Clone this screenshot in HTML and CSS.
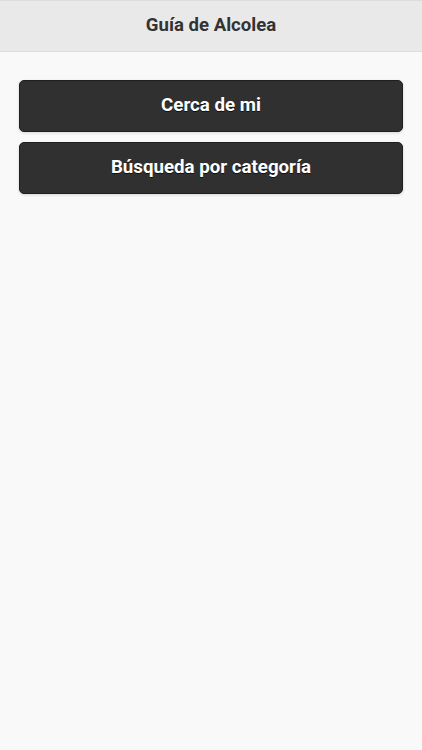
FILE: index.html
```html
<!doctype html>
<html lang="es">
    <head>
        <meta charset="utf-8"/>
        <title>Guía de Alcolea</title>
        <link rel="stylesheet" href="styles.css">
    </head>
    <body>
        <div class="page">
            <header class="bar">
                <h1>Guía de Alcolea</h1>
            </header>
            <main class="content">
                <a class="btn" href="#cerca">Cerca de mi</a>
                <a class="btn" href="#categorias">Búsqueda por categoría</a>
            </main>
        </div>
    </body>
</html>
```

FILE: styles.css
```css
body {
    margin: 0;
    background-color: #f9f9f9;
    font-family: Roboto, "Liberation Sans", sans-serif;
}

.page {
    min-height: 750px;
}

.bar {
    background-color: #e9e9e9;
    border-top: 1px solid #dddddd;
    border-bottom: 1px solid #dddddd;
    height: 50px;
    display: flex;
    align-items: center;
    justify-content: center;
}

.bar h1 {
    margin: 0 0 2px;
    font-size: 18.6px;
    font-weight: bold;
    color: #333333;
}

.content {
    padding: 28px 19px;
    display: flex;
    flex-direction: column;
    gap: 10px;
}

.btn {
    display: flex;
    align-items: center;
    justify-content: center;
    box-sizing: border-box;
    height: 52px;
    padding-bottom: 2px;
    background-color: #303030;
    border: 1px solid #1f1f1f;
    border-radius: 5px;
    color: #ffffff;
    font-size: 18.7px;
    font-weight: bold;
    text-decoration: none;
    text-shadow: 0 1px 0 #111111;
    box-shadow: 0 1px 3px rgba(0, 0, 0, 0.15);
}
```
